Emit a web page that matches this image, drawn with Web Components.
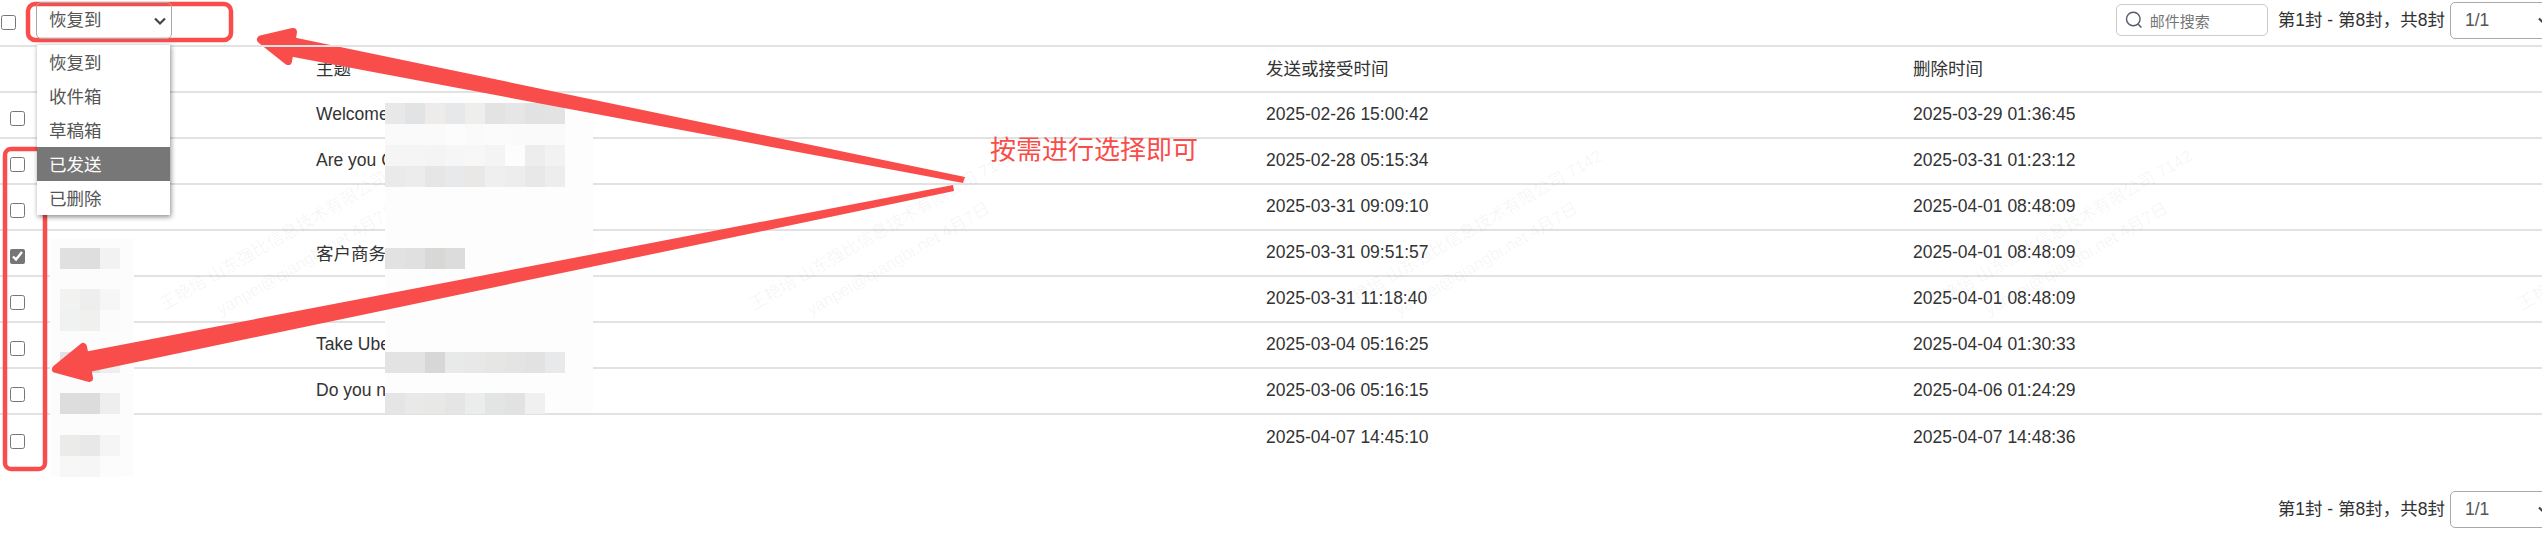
<!DOCTYPE html>
<html lang="zh">
<head>
<meta charset="utf-8">
<style>
  html, body { margin: 0; height: 559px; overflow: hidden; background: #fff; }
  body { font-family: "Liberation Sans", "Noto Sans CJK SC", sans-serif; font-size: 17.5px; color: #333; position: relative; }
</style>
</head>
<body>
<mail-trash>
  <mail-toolbar slot="toolbar">
    <mail-check></mail-check>
    <mail-select slot="left" label="恢复到" open>
      <mail-option>恢复到</mail-option>
      <mail-option>收件箱</mail-option>
      <mail-option>草稿箱</mail-option>
      <mail-option active>已发送</mail-option>
      <mail-option>已删除</mail-option>
    </mail-select>
    <mail-search slot="right"></mail-search>
    <mail-pager slot="right"></mail-pager>
  </mail-toolbar>

  <mail-row header><span slot="subject">主题</span><span slot="sent">发送或接受时间</span><span slot="deleted">删除时间</span></mail-row>
  <mail-row><span slot="subject">Welcome</span><span slot="sent">2025-02-26 15:00:42</span><span slot="deleted">2025-03-29 01:36:45</span></mail-row>
  <mail-row><span slot="subject">Are you C</span><span slot="sent">2025-02-28 05:15:34</span><span slot="deleted">2025-03-31 01:23:12</span></mail-row>
  <mail-row><span slot="sent">2025-03-31 09:09:10</span><span slot="deleted">2025-04-01 08:48:09</span></mail-row>
  <mail-row checked><span slot="subject">客户商务</span><span slot="sent">2025-03-31 09:51:57</span><span slot="deleted">2025-04-01 08:48:09</span></mail-row>
  <mail-row><span slot="sent">2025-03-31 11:18:40</span><span slot="deleted">2025-04-01 08:48:09</span></mail-row>
  <mail-row><span slot="subject">Take Ube</span><span slot="sent">2025-03-04 05:16:25</span><span slot="deleted">2025-04-04 01:30:33</span></mail-row>
  <mail-row><span slot="subject">Do you n</span><span slot="sent">2025-03-06 05:16:15</span><span slot="deleted">2025-04-06 01:24:29</span></mail-row>
  <mail-row last><span slot="sent">2025-04-07 14:45:10</span><span slot="deleted">2025-04-07 14:48:36</span></mail-row>

  <mail-footer slot="footer"><mail-pager></mail-pager></mail-footer>
</mail-trash>

<water-mark x="153"></water-mark>
<water-mark x="743"></water-mark>
<water-mark x="1331"></water-mark>
<water-mark x="1921"></water-mark>
<water-mark x="2511"></water-mark>

<!-- blurred-out subject column -->
<mosaic-patch box="385,97,208,316" base="#fdfdfd" cells="
  0,6,9,e8e8e8|e2e3e4|eeecea|e7e8ea|eeeeec|e3e3e3|e6e6e6|e2e2e2|e3e3e3;
  0,27,9,fafafa|fafafa|fafafa|fbfcfb|fafafa|fbfbfb|fafafa|fafafa|fafafa;
  0,48,9,f5f5f5|f5f5f5|f4f4f4|f5f6f5|f7f7f7|f4f4f4|fdfdfd|ededed|f2f2f2;
  0,69,9,eaeaea|ececec|e6e6e6|e8e9ea|e9e8e6|efefef|eeeded|e8e8e8|ededed;
  0,151,4,e2e2e2|e0e0e0|d8d8d6|dcdcdc;
  0,255,9,e3e3e3|e3e3e3|d7d7d7|e8e9e9|e8e8e8|e6e6e4|e4e4e4|e2e2e2|e8e9eb;
  0,296,8,e5e5e5|e9e9e9|e8e8e6|e4e5e4|ebecec|e3e4e4|e2e2e2|f0f0f0"></mosaic-patch>
<!-- blurred-out sender column -->
<mosaic-patch box="50,239,84,237" base="#fcfcfc" start="10" cells="
  0,9,3,e0e0e0|dedede|f1f2f1;
  0,50,3,f2f2f0|eeeeee|f6f6f6;
  0,71,3,f0f2f1|f0f0ee|fbfbfb;
  0,113,3,e3e3e3|e0e0e0|eeeeee;
  0,154,3,dddddd|dcdcdc|eeeeee;
  0,196,3,ebebe9|e8e8e8|f5f5f5;
  0,217,3,f7f7f7|f6f6f6|fcfcfc"></mosaic-patch>

<red-marks></red-marks>

<script>
class MailTrash extends HTMLElement {
  constructor() {
    super();
    this.attachShadow({ mode: 'open' });
    this.shadowRoot.innerHTML = `
      <style>
        :host { display: flex; flex-direction: column; width: 2542px; height: 559px; overflow: hidden; }
      </style>
      <slot name="toolbar"></slot>
      <slot></slot>
      <slot name="footer"></slot>
    `;
  }
}

class MailToolbar extends HTMLElement {
  constructor() {
    super();
    this.attachShadow({ mode: 'open' });
    this.shadowRoot.innerHTML = `
      <style>
        :host { display: flex; align-items: flex-start; height: 47px; box-sizing: border-box; border-bottom: 2px solid #e2e2e2; position: relative; z-index: 3; flex: none; }
        .check { padding: 15px 20px 0 1px; display: flex; }
        .left { display: flex; padding-top: 2px; }
        .right { display: flex; align-items: flex-start; margin-left: auto; gap: 10px; padding-top: 4px; }
      </style>
      <div class="check"><slot></slot></div>
      <div class="left"><slot name="left"></slot></div>
      <div class="right"><slot name="right"></slot></div>
    `;
  }
}

class MailCheck extends HTMLElement {
  constructor() {
    super();
    this.attachShadow({ mode: 'open' });
    const checked = this.hasAttribute('checked') ? 'checked' : '';
    this.shadowRoot.innerHTML = `
      <style>
        :host { display: inline-flex; }
        input { width: 15px; height: 15px; margin: 0; accent-color: #767676; }
      </style>
      <input type="checkbox" ${checked}>
    `;
  }
}

class MailSelect extends HTMLElement {
  constructor() {
    super();
    this.attachShadow({ mode: 'open' });
    const label = this.getAttribute('label') || '';
    this.shadowRoot.innerHTML = `
      <style>
        :host { display: block; position: relative; width: 136px; height: 37px; box-sizing: border-box; border: 1px solid #aaa; border-radius: 5px; color: #555; }
        :host([pager]) { width: 106px; margin-top: -2px; }
        .label { display: flex; align-items: center; height: 100%; box-sizing: border-box; padding: 0 0 4px 12px; }
        :host([pager]) .label { padding: 0 0 0 14px; }
        svg { position: absolute; right: 4px; top: 13px; }
        .menu { display: none; position: absolute; left: 0; top: 41px; width: 133px; background: #fff; box-shadow: 1px 2px 5px rgba(0, 0, 0, 0.45); border-top: 1px solid #e4e4e4; }
        :host([open]) .menu { display: block; }
      </style>
      <div class="label">${label}</div>
      <svg width="14" height="10" viewBox="0 0 14 10"><path d="M2 2.5 L7 7.5 L12 2.5" fill="none" stroke="#444" stroke-width="2.2"/></svg>
      <div class="menu"><slot></slot></div>
    `;
  }
}

class MailOption extends HTMLElement {
  constructor() {
    super();
    this.attachShadow({ mode: 'open' });
    this.shadowRoot.innerHTML = `
      <style>
        :host { display: flex; align-items: center; height: 34px; box-sizing: border-box; padding: 0 0 2px 12px; color: #555; }
        :host([active]) { background: #777; color: #fff; }
      </style>
      <slot></slot>
    `;
  }
}

class MailSearch extends HTMLElement {
  constructor() {
    super();
    this.attachShadow({ mode: 'open' });
    this.shadowRoot.innerHTML = `
      <style>
        :host { display: flex; align-items: center; gap: 7px; width: 152px; height: 32px; box-sizing: border-box; padding-left: 8px; border: 1px solid #ccc; border-radius: 5px; font-size: 15px; color: #757575; }
        svg { flex: none; }
      </style>
      <svg width="18" height="18" viewBox="0 0 18 18"><circle cx="8.3" cy="8" r="6.8" fill="none" stroke="#555b6e" stroke-width="1.4"/><path d="M13 13 L16.4 16.6" fill="none" stroke="#555b6e" stroke-width="1.5"/></svg>
      <span>邮件搜索</span>
    `;
  }
}

class MailPager extends HTMLElement {
  constructor() {
    super();
    this.attachShadow({ mode: 'open' });
    this.shadowRoot.innerHTML = `
      <style>
        :host { display: flex; align-items: flex-start; gap: 5px; margin-right: -14px; }
        span { line-height: 33px; }
      </style>
      <span>第1封 - 第8封，共8封</span>
      <mail-select pager label="1/1"></mail-select>
    `;
  }
}

class MailRow extends HTMLElement {
  constructor() {
    super();
    this.attachShadow({ mode: 'open' });
    const check = this.hasAttribute('header') ? '' :
      `<mail-check ${this.hasAttribute('checked') ? 'checked' : ''}></mail-check>`;
    this.shadowRoot.innerHTML = `
      <style>
        :host { display: grid; grid-template-columns: 316px 950px 647px 1fr; align-items: center; height: 46px; box-sizing: border-box; padding-bottom: 2px; border-bottom: 2px solid #e2e2e2; flex: none; }
        :host([header]) { padding-bottom: 4px; }
        :host([last]) { border-bottom: 0; }
        .check { padding: 9px 0 0 10px; display: flex; }
      </style>
      <div class="check">${check}</div>
      <div><slot name="subject"></slot></div>
      <div><slot name="sent"></slot></div>
      <div><slot name="deleted"></slot></div>
    `;
  }
}

class MailFooter extends HTMLElement {
  constructor() {
    super();
    this.attachShadow({ mode: 'open' });
    this.shadowRoot.innerHTML = `
      <style>
        :host { display: flex; justify-content: flex-end; padding-top: 32px; }
      </style>
      <slot></slot>
    `;
  }
}

class WaterMark extends HTMLElement {
  constructor() {
    super();
    this.attachShadow({ mode: 'open' });
    const x = this.getAttribute('x');
    this.shadowRoot.innerHTML = `
      <style>
        :host { display: block; position: absolute; left: ${x}px; top: 294px; width: 320px; text-align: center; font-size: 17px; line-height: 33px; color: rgba(0, 0, 0, 0.05); transform: rotate(-30deg); transform-origin: 0 16px; white-space: nowrap; pointer-events: none; }
      </style>
      <div>王艳培 山东强比信息技术有限公司 7142</div>
      <div>yanpei@qiangbi.net 4月7日</div>
    `;
  }
}

// box = left,top,width,height; each cell row = x,y,count,colour|colour...
class MosaicPatch extends HTMLElement {
  constructor() {
    super();
    this.attachShadow({ mode: 'open' });
    const [left, top, width, height] = this.getAttribute('box').split(',');
    const start = parseInt(this.getAttribute('start') || '0');
    const rows = this.getAttribute('cells').split(';').map((r) => r.trim()).filter(Boolean);
    let html = '';
    rows.forEach((r) => {
      const [x, y, , colours] = r.split(',');
      colours.split('|').forEach((c, i) => {
        html += `<i style="left:${start + parseInt(x) + i * 20}px;top:${y}px;background:#${c}"></i>`;
      });
    });
    this.shadowRoot.innerHTML = `
      <style>
        :host { display: block; position: absolute; left: ${left}px; top: ${top}px; width: ${width}px; height: ${height}px; background: ${this.getAttribute('base')}; }
        i { position: absolute; width: 20px; height: 21px; }
      </style>
      ${html}
    `;
  }
}

class RedMarks extends HTMLElement {
  constructor() {
    super();
    this.attachShadow({ mode: 'open' });
    this.shadowRoot.innerHTML = `
      <style>
        :host { display: block; position: absolute; left: 0; top: 0; width: 2542px; height: 559px; pointer-events: none; }
        svg { position: absolute; left: 0; top: 0; }
        .note { position: absolute; left: 990px; top: 129px; font-size: 26px; line-height: 38px; color: #f94d4a; font-family: "Noto Sans CJK SC", sans-serif; font-weight: 400; white-space: nowrap; }
      </style>
      <svg width="2542" height="559" viewBox="0 0 2542 559">
        <g fill="#f94d4b" stroke="#f94d4b" stroke-linejoin="round">
          <path stroke-width="0" d="M965 177 L292 37 L288 56 L963 183 Z"/>
          <path stroke-width="8" d="M261 39.5 L293 32 L288 61 Z"/>
          <path stroke-width="0" d="M953 185 L84 352 L89 372 L954 191 Z"/>
          <path stroke-width="8" d="M56 369 L83 347 L89 378 Z"/>
        </g>
        <rect x="28" y="4" width="203" height="36" rx="7" fill="none" stroke="#f94d4b" stroke-width="4.5"/>
        <rect x="5" y="149" width="40" height="320" rx="6" fill="none" stroke="#f94d4b" stroke-width="4.5"/>
      </svg>
      <div class="note">按需进行选择即可</div>
    `;
  }
}

customElements.define('mail-trash', MailTrash);
customElements.define('mail-toolbar', MailToolbar);
customElements.define('mail-check', MailCheck);
customElements.define('mail-select', MailSelect);
customElements.define('mail-option', MailOption);
customElements.define('mail-search', MailSearch);
customElements.define('mail-pager', MailPager);
customElements.define('mail-row', MailRow);
customElements.define('mail-footer', MailFooter);
customElements.define('water-mark', WaterMark);
customElements.define('mosaic-patch', MosaicPatch);
customElements.define('red-marks', RedMarks);
</script>
</body>
</html>
